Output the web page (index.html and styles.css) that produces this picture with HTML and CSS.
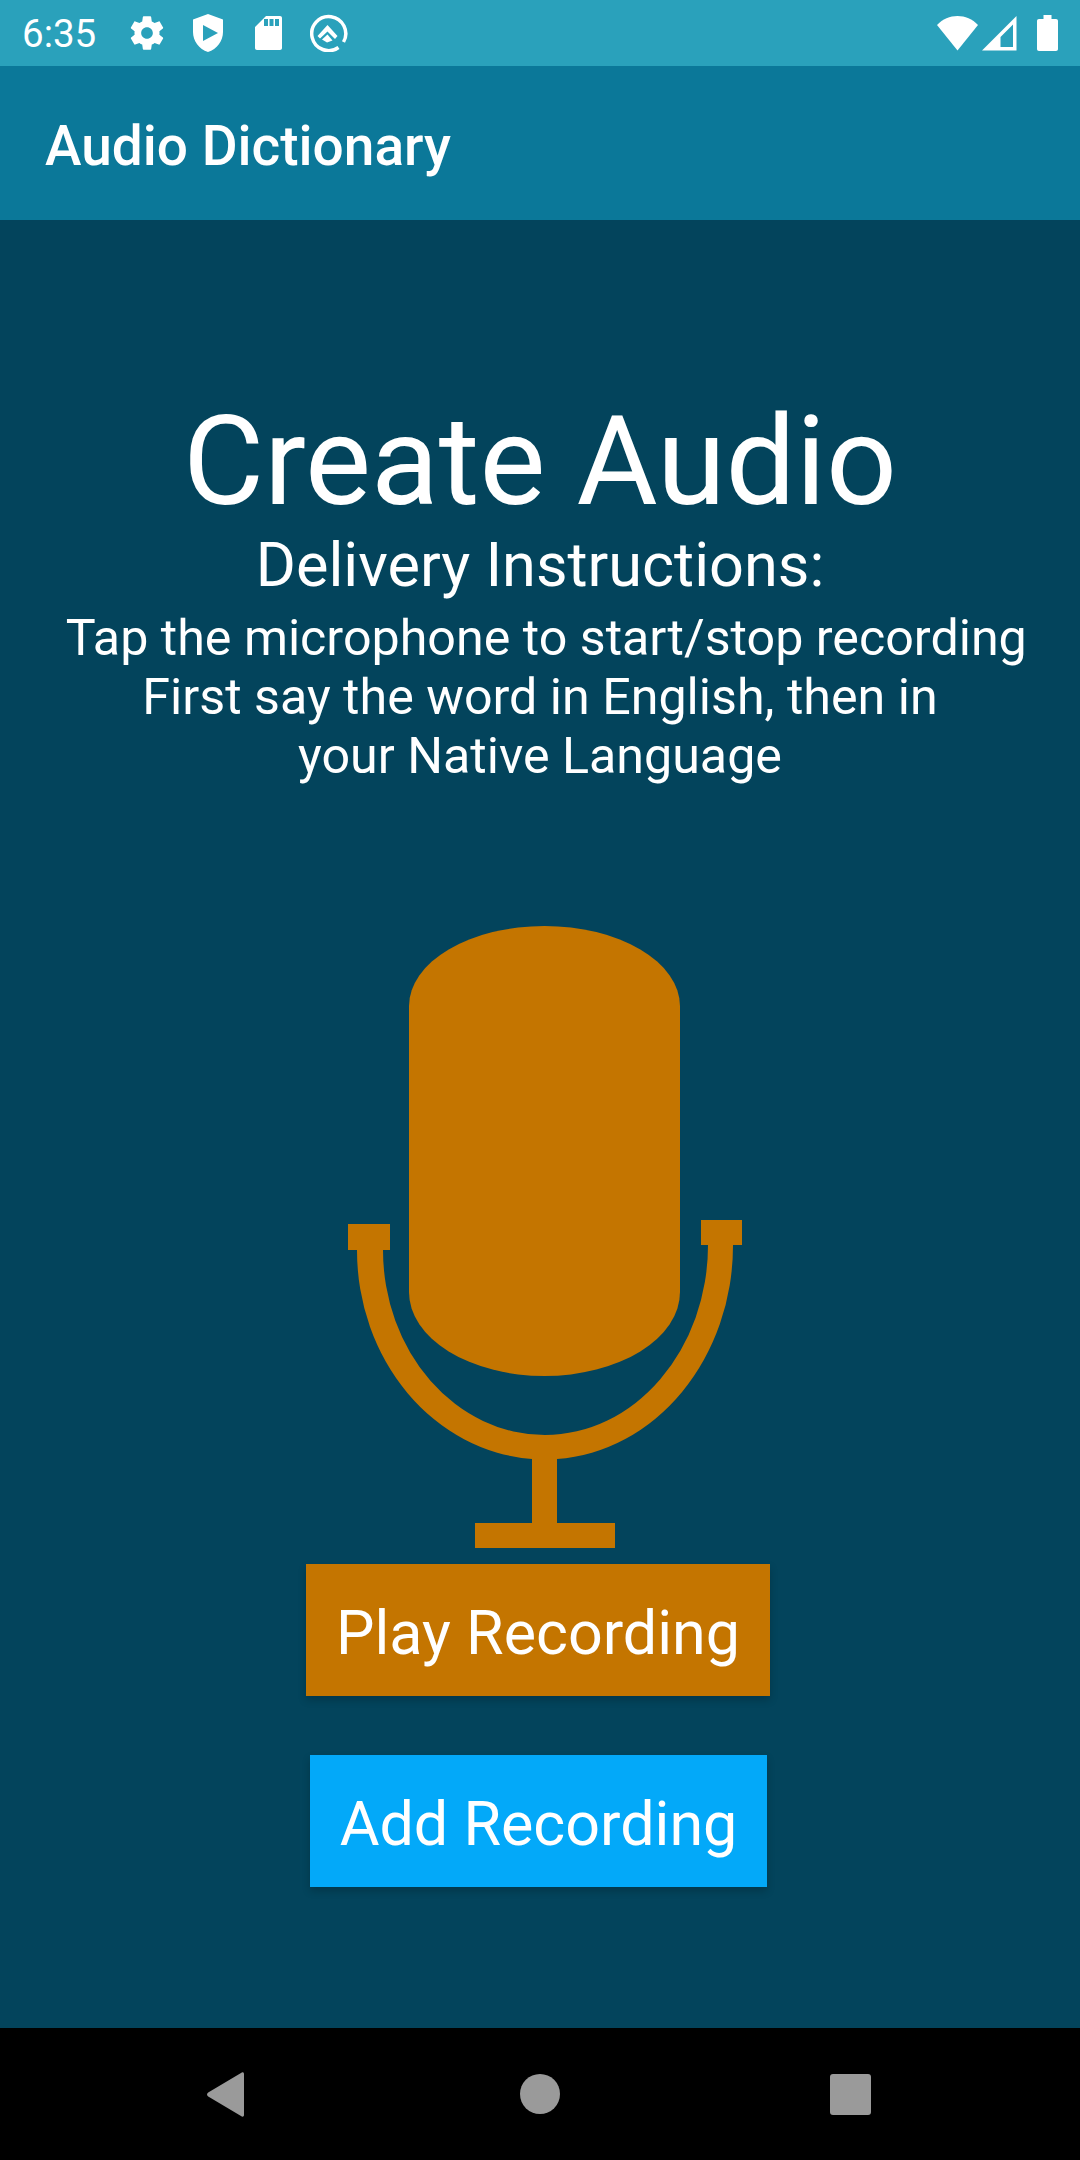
FILE: index.html
```html
<!DOCTYPE html>
<html lang="en">
<head>
    <meta charset="UTF-8">
    <meta name="viewport" content="width=device-width, initial-scale=1.0">
    <title>Audio Dictionary</title>
    <link rel="stylesheet" href="styles.css">
</head>
<body>
    <div class="status-bar">
        <span class="clock">6:35</span>
        <div class="status-icons">
            <svg class="icon-gear" viewBox="0 0 24 24"><path d="M19.43 12.98c.04-.32.07-.64.07-.98s-.03-.66-.07-.98l2.11-1.65c.19-.15.24-.42.12-.64l-2-3.46c-.12-.22-.39-.3-.61-.22l-2.49 1c-.52-.4-1.08-.73-1.69-.98l-.38-2.65C14.46 2.18 14.25 2 14 2h-4c-.25 0-.46.18-.49.42l-.38 2.65c-.61.25-1.17.59-1.69.98l-2.49-1c-.23-.09-.49 0-.61.22l-2 3.46c-.13.22-.07.49.12.64l2.11 1.65c-.04.32-.07.65-.07.98s.03.66.07.98l-2.11 1.65c-.19.15-.24.42-.12.64l2 3.46c.12.22.39.3.61.22l2.49-1c.52.4 1.08.73 1.69.98l.38 2.65c.03.24.24.42.49.42h4c.25 0 .46-.18.49-.42l.38-2.65c.61-.25 1.17-.59 1.69-.98l2.49 1c.23.09.49 0 .61-.22l2-3.46c.12-.22.07-.49-.12-.64l-2.11-1.65zM12 15.5c-1.93 0-3.5-1.57-3.5-3.5s1.57-3.5 3.5-3.5 3.5 1.57 3.5 3.5-1.57 3.5-3.5 3.5z"/></svg>
            <svg class="icon-shield" viewBox="0 0 30 38"><path fill-rule="evenodd" d="M15 0 L30 5.500 V18 C30 27 24 35 15 38 C6 35 0 27 0 18 V5.500 Z M10 11 V27 L25 19 Z"/></svg>
            <svg class="icon-sd" viewBox="0 0 27 34"><path fill-rule="evenodd" d="M11 0 H25 C26.200 0 27 .8 27 2 V32 C27 33.200 26.200 34 25 34 H2 C.8 34 0 33.200 0 32 V11 Z M9 3 V10 H13 V3 Z M14.500 3 V10 H18.500 V3 Z M20 3 V10 H24 V3 Z"/></svg>
            <svg class="icon-q" viewBox="0 0 38 38">
                <path class="q-ring" d="M28.500 33.500 A17 17 0 1 1 33.500 28"/>
                <path d="M17.500 11 L27.500 22 L25 25 L17.500 17.500 L10 24.500 L7.500 22 Z"/>
                <path d="M12 25.500 L17.500 20.500 L22.500 26.500 L17 28.500 Z"/>
            </svg>
        </div>
        <div class="status-right">
            <svg class="icon-wifi" viewBox="0 0 41 35"><path d="M0 9 C11 -3 30 -3 41 9 L20.500 34.500 Z"/></svg>
            <svg class="icon-signal" viewBox="0 0 35 35"><path fill-rule="evenodd" d="M34.500 0 V34.500 H0 Z M31 8.500 L18.500 21 V31 H31 Z"/></svg>
            <svg class="icon-battery" viewBox="0 0 21 36"><path d="M6.500 0 H14.500 V4 H19 C20.200 4 21 4.800 21 6 V34 C21 35.200 20.200 36 19 36 H2 C.8 36 0 35.200 0 34 V6 C0 4.800 .8 4 2 4 H6.500 Z"/></svg>
        </div>
    </div>

    <header class="app-bar">
        <h1>Audio Dictionary</h1>
    </header>

    <main class="content">
        <h2 class="title">Create Audio</h2>
        <p class="subtitle">Delivery Instructions:</p>
        <p class="instructions">&nbsp;Tap the microphone to start/stop recording<br>First say the word in English, then in<br>your Native Language</p>

        <svg class="mic" viewBox="0 0 394 622">
            <path d="M61 80 A135.500 80 0 0 1 332 80 V366 A135.500 84 0 0 1 61 366 Z"/>
            <path d="M0 298 H42 V324 H35 A162 185 0 0 0 197 509 A163 190 0 0 0 360 319 H353 V294 H394 V319 H385 A188 214 0 0 1 209 533 V597 H267 V622 H127 V597 H184 V533 A188 209 0 0 1 9 324 H0 Z"/>
        </svg>

        <button class="btn btn-play">Play Recording</button>
        <button class="btn btn-add">Add Recording</button>
    </main>

    <nav class="nav-bar">
        <svg class="nav-back" viewBox="0 0 37 45"><path d="M34 1 C35.500 -.3 37 .5 37 2 V43 C37 44.500 35.500 45.300 34 44 L1.200 24.500 C-.4 23.400 -.4 21.600 1.200 20.500 Z"/></svg>
        <span class="nav-home"></span>
        <span class="nav-recent"></span>
    </nav>
</body>
</html>
```

FILE: styles.css
```css
body {
    margin: 0;
    width: 1080px;
    height: 2160px;
    display: flex;
    flex-direction: column;
    font-family: Roboto, sans-serif;
    color: #fff;
    background-color: #03445c;
    overflow: hidden;
}
svg {
    display: block;
    fill: #fff;
}

.status-bar {
    height: 66px;
    flex: none;
    display: flex;
    align-items: center;
    padding: 0 22px;
    background-color: #2aa1bb;
}
.clock {
    font-size: 38.500px;
    width: 108.500px;
    padding-top: 1px;
}
.status-icons {
    display: flex;
    align-items: center;
}
.status-right {
    display: flex;
    align-items: center;
    margin-left: auto;
}
.icon-gear { width: 40px; height: 40px; margin: 0 -4px; }
.icon-shield { width: 30px; height: 38px; margin-left: 30px; }
.icon-sd { width: 27px; height: 34px; margin-left: 32px; }
.icon-q { width: 38px; height: 38px; margin-left: 28px; }
.q-ring {
    fill: none;
    stroke: #fff;
    stroke-width: 3.500;
}
.icon-wifi { width: 41px; height: 35px; }
.icon-signal { width: 35px; height: 35px; margin-left: 4px; margin-right: 20px; }
.icon-battery { width: 21px; height: 36px; }

.app-bar {
    height: 154px;
    flex: none;
    box-sizing: border-box;
    display: flex;
    align-items: center;
    padding: 5px 0 0 45px;
    background-color: #0b7899;
}
.app-bar h1 {
    margin: 0;
    font-size: 55px;
    font-weight: 500;
}

.content {
    flex: 1;
    display: flex;
    flex-direction: column;
    align-items: center;
}
.title {
    margin: 168px 0 0;
    font-size: 124.500px;
    font-weight: 400;
    line-height: 146px;
}
.subtitle {
    margin: -4px 0 0;
    font-size: 61.250px;
    line-height: 70px;
}
.instructions {
    margin: 8px 0 0;
    font-size: 50.200px;
    line-height: 59px;
    text-align: center;
}
.mic {
    width: 394px;
    height: 622px;
    margin-top: 141px;
    margin-left: 10px;
    flex: none;
    fill: #c47500;
}
.btn {
    display: block;
    flex: none;
    height: 132px;
    padding: 5px 0 0;
    border: none;
    color: #fff;
    font-family: Roboto, sans-serif;
    font-size: 61px;
    box-shadow: 0 4px 8px rgba(0, 0, 0, 0.2);
}
.btn-play {
    width: 464px;
    margin-top: 16px;
    margin-left: -4px;
    background-color: #c47500;
}
.btn-add {
    width: 457px;
    margin-top: 59px;
    margin-left: -3px;
    background-color: #03a9f9;
}

.nav-bar {
    height: 132px;
    flex: none;
    position: relative;
    background-color: #000;
}
.nav-back,
.nav-home,
.nav-recent {
    position: absolute;
    display: block;
}
.nav-back {
    left: 207px;
    top: 44px;
    width: 37px;
    height: 45px;
    fill: #9a9a9a;
}
.nav-home {
    left: 520px;
    top: 46px;
    width: 40px;
    height: 40px;
    border-radius: 50%;
    background-color: #9a9a9a;
}
.nav-recent {
    left: 830px;
    top: 46px;
    width: 41px;
    height: 41px;
    border-radius: 3px;
    background-color: #9a9a9a;
}
```
